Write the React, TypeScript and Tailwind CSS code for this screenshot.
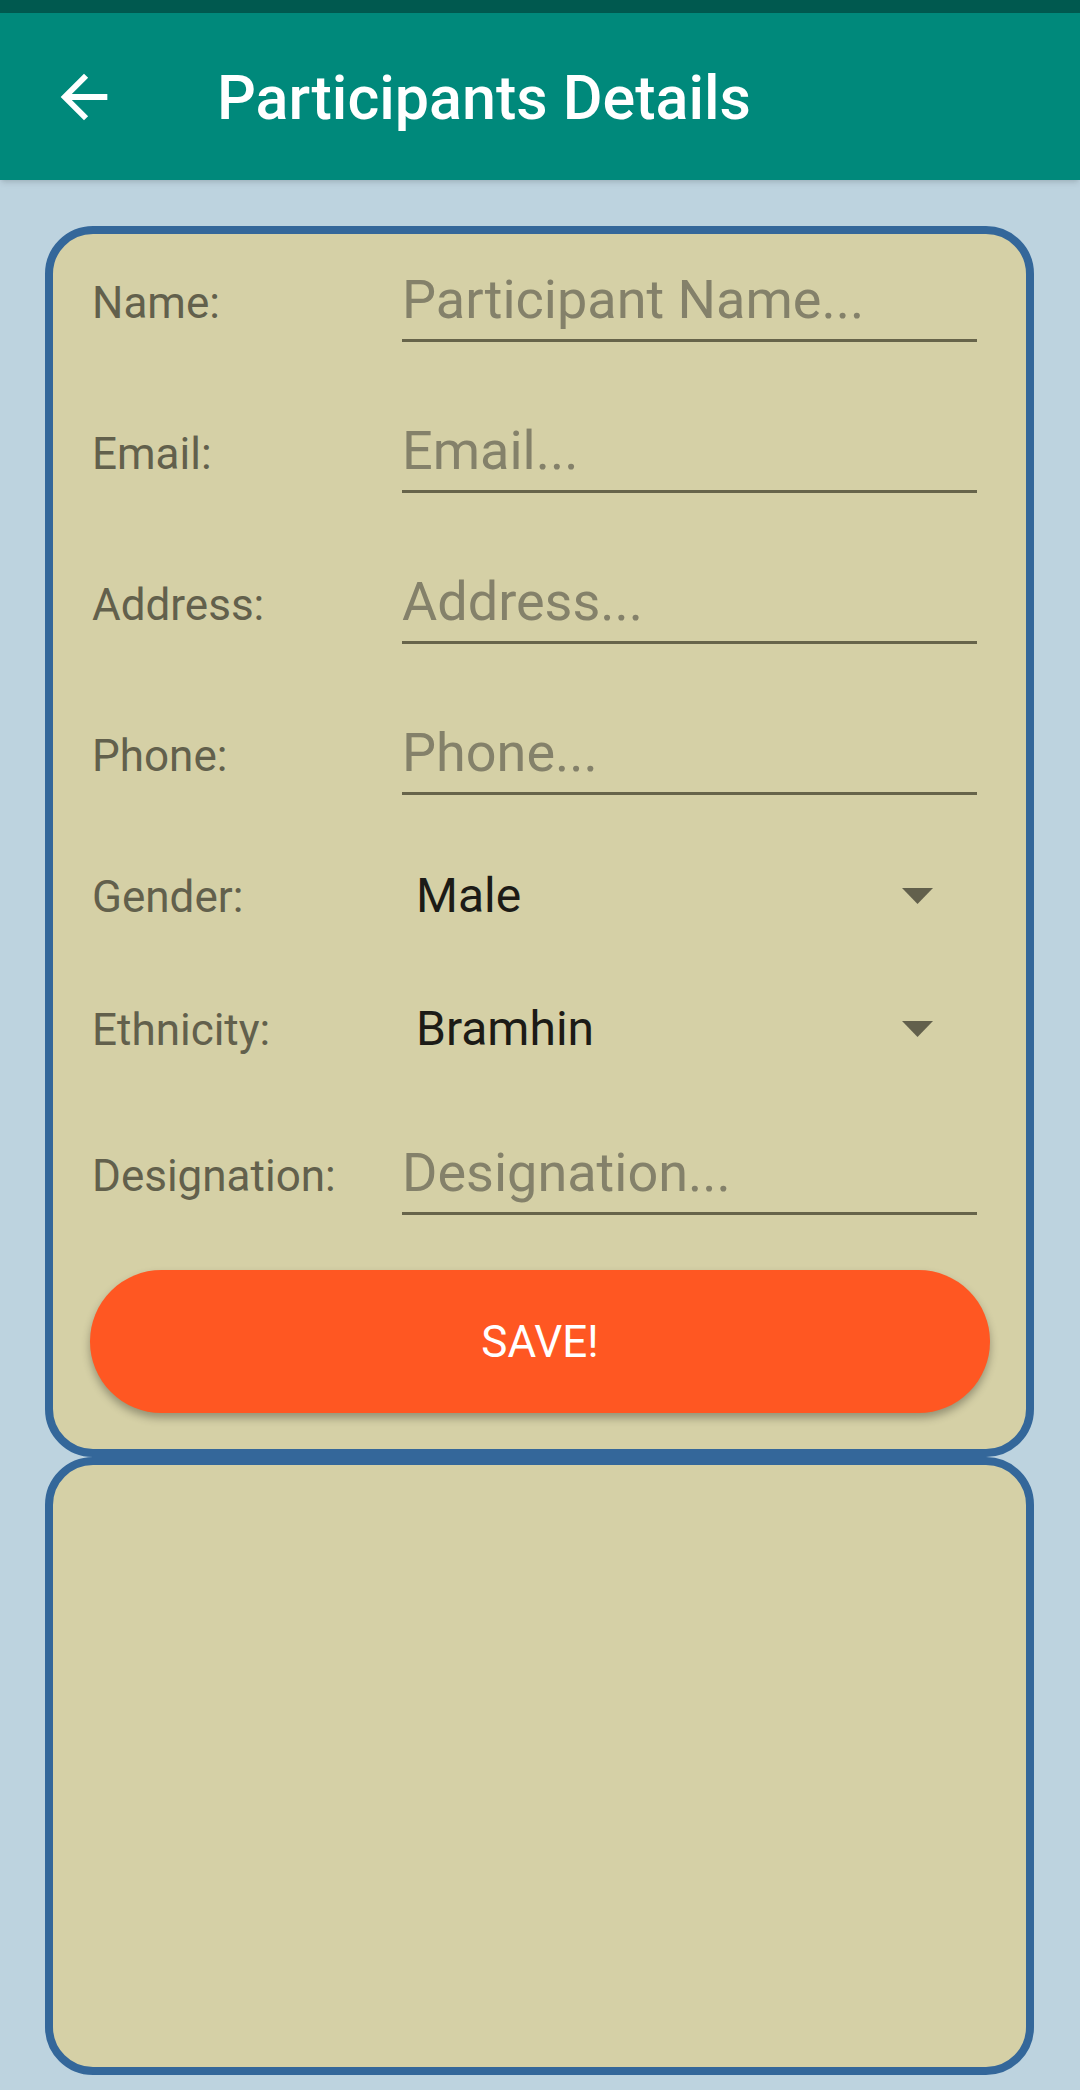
import React from "react";

const FONT = { fontFamily: "Roboto, 'Liberation Sans', sans-serif" };

function TextRow({ label, placeholder, mt }: { label: string; placeholder: string; mt: string }) {
  return (
    <div className={`flex items-baseline ${mt}`}>
      <span className="w-[310px] shrink-0 text-[44px] leading-none text-[#62604c]">{label}</span>
      <div className="w-[575px] border-b-[3px] border-[#67644a] pb-[6px]">
        <span className="block text-[54px] leading-[66px] text-[#84816a]">{placeholder}</span>
      </div>
    </div>
  );
}

function SpinnerRow({ label, value, mt }: { label: string; value: string; mt: string }) {
  return (
    <div className={`flex items-baseline ${mt}`}>
      <span className="w-[310px] shrink-0 text-[44px] leading-none text-[#62604c]">{label}</span>
      <div className="flex w-[575px] items-center justify-between pl-[14px] pr-[44px]">
        <span className="text-[48px] leading-none text-[#1c1b16]">{value}</span>
        <svg width="31" height="16" viewBox="0 0 31 16">
          <polygon points="0,0 31,0 15.5,16" fill="#62604c" />
        </svg>
      </div>
    </div>
  );
}

export default function App() {
  return (
    <div className="h-[2090px] w-[1080px] overflow-hidden bg-[#bdd3df]" style={FONT}>
      {/* status bar */}
      <div className="h-[13px] bg-[#00594f]" />

      {/* toolbar */}
      <div className="relative z-10 flex h-[167px] items-center bg-[#00897b] shadow-md">
        <svg className="ml-[49px]" width="70" height="70" viewBox="0 0 24 24" fill="#ffffff">
          <path d="M20 11H7.83l5.59-5.59L12 4l-8 8 8 8 1.41-1.41L7.83 13H20v-2z" />
        </svg>
        <h1 className="ml-[98px] mt-[4px] text-[61px] font-medium text-white">Participants Details</h1>
      </div>

      {/* form card */}
      <div className="ml-[45px] mr-[46px] mt-[46px] h-[1231px] rounded-[48px] border-[8px] border-[#34679a] bg-[#d5d0a6] pl-[39px]">
        <TextRow label="Name:" placeholder="Participant Name..." mt="mt-[33px]" />
        <TextRow label="Email:" placeholder="Email..." mt="mt-[76px]" />
        <TextRow label="Address:" placeholder="Address..." mt="mt-[76px]" />
        <TextRow label="Phone:" placeholder="Phone..." mt="mt-[76px]" />
        <SpinnerRow label="Gender:" value="Male" mt="mt-[77px]" />
        <SpinnerRow label="Ethnicity:" value="Bramhin" mt="mt-[85px]" />
        <TextRow label="Designation:" placeholder="Designation..." mt="mt-[87px]" />
        <button className="mt-[55px] flex h-[143px] w-[900px] -translate-x-[2px] items-center justify-center rounded-full bg-[#ff5722] text-[44px] text-white shadow-[0_5px_8px_rgba(0,0,0,0.3)]">
          SAVE!
        </button>
      </div>

      {/* list card */}
      <div className="ml-[45px] mr-[46px] h-[618px] rounded-[48px] border-[8px] border-[#34679a] bg-[#d5d0a6]" />
    </div>
  );
}
